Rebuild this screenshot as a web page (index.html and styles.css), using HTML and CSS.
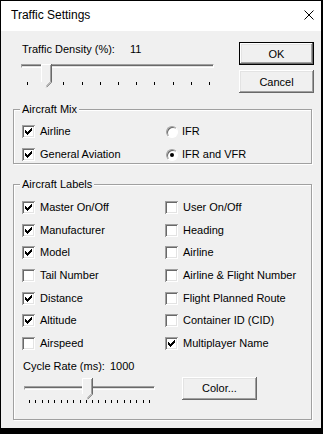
FILE: index.html
```html
<!DOCTYPE html>
<html lang="en">
<head>
    <meta charset="UTF-8">
    <title>Traffic Settings</title>
    <link rel="stylesheet" href="styles.css">
</head>
<body>
    <div class="window">
        <div class="titlebar">
            <span class="title">Traffic Settings</span>
            <svg class="close" width="10" height="10" viewBox="0 0 10 10"><path d="M0.5 0.5L9.5 9.5M9.5 0.5L0.5 9.5" stroke="#000" stroke-width="1" fill="none"/></svg>
        </div>
        <div class="content">
            <div class="top">
                <div class="density">
                    <div class="value-line"><span>Traffic Density (%):</span><span class="value">11</span></div>
                    <div class="slider slider-density">
                        <div class="track"></div>
                        <svg class="thumb" style="left: 20px" width="11" height="24" viewBox="0 0 11 24">
                            <path d="M0 0H11V18L5.5 23.5L0 18Z" fill="#f0f0f0"/>
                            <path d="M0.5 18V0.5H10" stroke="#fff" fill="none"/>
                            <path d="M10.5 0V18.2L5.5 23.2" stroke="#696969" fill="none"/>
                            <path d="M9.5 1V17.8L5.5 21.8" stroke="#a0a0a0" fill="none"/>
                        </svg>
                        <div class="ticks">
                            <span></span><span></span><span></span><span></span><span></span><span></span>
                            <span></span><span></span><span></span><span></span><span></span>
                        </div>
                    </div>
                </div>
                <div class="buttons">
                    <button class="btn btn-default">OK</button>
                    <button class="btn">Cancel</button>
                </div>
            </div>

            <div class="group group-mix">
                <span class="group-title">Aircraft Mix</span>
                <div class="options">
                    <div class="opt"><span class="check on"><svg width="13" height="13" viewBox="0 0 13 13"><path d="M9 3H10V6H9V7H8V8H7V9H6V10H5V9H4V8H3V5H4V6H5V7H6V6H7V5H8V4H9Z" fill="#000"/></svg></span>Airline</div>
                    <div class="opt"><span class="radio"></span>IFR</div>
                    <div class="opt"><span class="check on"><svg width="13" height="13" viewBox="0 0 13 13"><path d="M9 3H10V6H9V7H8V8H7V9H6V10H5V9H4V8H3V5H4V6H5V7H6V6H7V5H8V4H9Z" fill="#000"/></svg></span>General Aviation</div>
                    <div class="opt"><span class="radio on"></span>IFR and VFR</div>
                </div>
            </div>

            <div class="group group-labels">
                <span class="group-title">Aircraft Labels</span>
                <div class="options">
                    <div class="opt"><span class="check on"><svg width="13" height="13" viewBox="0 0 13 13"><path d="M9 3H10V6H9V7H8V8H7V9H6V10H5V9H4V8H3V5H4V6H5V7H6V6H7V5H8V4H9Z" fill="#000"/></svg></span>Master On/Off</div>
                    <div class="opt"><span class="check"></span>User On/Off</div>
                    <div class="opt"><span class="check on"><svg width="13" height="13" viewBox="0 0 13 13"><path d="M9 3H10V6H9V7H8V8H7V9H6V10H5V9H4V8H3V5H4V6H5V7H6V6H7V5H8V4H9Z" fill="#000"/></svg></span>Manufacturer</div>
                    <div class="opt"><span class="check"></span>Heading</div>
                    <div class="opt"><span class="check on"><svg width="13" height="13" viewBox="0 0 13 13"><path d="M9 3H10V6H9V7H8V8H7V9H6V10H5V9H4V8H3V5H4V6H5V7H6V6H7V5H8V4H9Z" fill="#000"/></svg></span>Model</div>
                    <div class="opt"><span class="check"></span>Airline</div>
                    <div class="opt"><span class="check"></span>Tail Number</div>
                    <div class="opt"><span class="check"></span>Airline &amp; Flight Number</div>
                    <div class="opt"><span class="check on"><svg width="13" height="13" viewBox="0 0 13 13"><path d="M9 3H10V6H9V7H8V8H7V9H6V10H5V9H4V8H3V5H4V6H5V7H6V6H7V5H8V4H9Z" fill="#000"/></svg></span>Distance</div>
                    <div class="opt"><span class="check"></span>Flight Planned Route</div>
                    <div class="opt"><span class="check on"><svg width="13" height="13" viewBox="0 0 13 13"><path d="M9 3H10V6H9V7H8V8H7V9H6V10H5V9H4V8H3V5H4V6H5V7H6V6H7V5H8V4H9Z" fill="#000"/></svg></span>Altitude</div>
                    <div class="opt"><span class="check"></span>Container ID (CID)</div>
                    <div class="opt"><span class="check"></span>Airspeed</div>
                    <div class="opt"><span class="check on"><svg width="13" height="13" viewBox="0 0 13 13"><path d="M9 3H10V6H9V7H8V8H7V9H6V10H5V9H4V8H3V5H4V6H5V7H6V6H7V5H8V4H9Z" fill="#000"/></svg></span>Multiplayer Name</div>
                </div>
                <div class="value-line cycle"><span>Cycle Rate (ms):</span><span class="value">1000</span></div>
                <div class="cycle-row">
                    <div class="slider slider-cycle">
                        <div class="track"></div>
                        <svg class="thumb" style="left: 58px" width="11" height="22" viewBox="0 0 11 22">
                            <path d="M0 0H11V16L5.5 21.5L0 16Z" fill="#f0f0f0"/>
                            <path d="M0.5 16V0.5H10" stroke="#fff" fill="none"/>
                            <path d="M10.5 0V16.2L5.5 21.2" stroke="#696969" fill="none"/>
                            <path d="M9.5 1V15.8L5.5 19.8" stroke="#a0a0a0" fill="none"/>
                        </svg>
                        <div class="ticks">
                            <span></span><span></span><span></span><span></span><span></span><span></span><span></span>
                            <span></span><span></span><span></span><span></span><span></span><span></span><span></span>
                            <span></span><span></span><span></span><span></span><span></span><span></span>
                        </div>
                    </div>
                    <button class="btn">Color...</button>
                </div>
            </div>
        </div>
    </div>
</body>
</html>
```

FILE: styles.css
```css
body {
    margin: 0;
    background: #000;
    font-family: "Liberation Sans", Arial, sans-serif;
    font-size: 11px;
    color: #000;
}
.window {
    margin: 1px 0 0 1px;
    width: 320px;
    height: 427px;
    background: #f0f0f0;
    display: flex;
    flex-direction: column;
}
.titlebar {
    height: 30px;
    background: #fff;
    display: flex;
    align-items: center;
    justify-content: space-between;
    padding: 0 7px 2px 10px;
    box-sizing: border-box;
    font-size: 12px;
    line-height: 14px;
}
.content {
    padding: 11px 7px 0 12px;
}
.top {
    display: flex;
    justify-content: space-between;
}
.density {
    padding: 1px 0 0 8px;
}
.value-line {
    line-height: 13px;
    padding-left: 1px;
    display: flex;
}
.value-line .value {
    margin-left: 15px;
}
.cycle .value {
    margin-left: 5px;
}
.slider {
    position: relative;
}
.slider-density {
    width: 193px;
    height: 30px;
    margin-top: 4px;
}
.track {
    height: 2px;
    border: 1px solid;
    border-color: #a0a0a0 #fff #fff #a0a0a0;
    background: linear-gradient(#696969 50%, #e3e3e3 50%);
    margin-top: 8px;
}
.thumb {
    position: absolute;
    top: 0;
    display: block;
}
.ticks {
    display: flex;
    justify-content: space-between;
}
.ticks span {
    width: 1px;
    height: 3px;
    background: #000;
}
.slider-density .ticks {
    margin-top: 14px;
    padding: 0 4px 0 6px;
}
.buttons {
    display: flex;
    flex-direction: column;
    gap: 5px;
}
.btn {
    width: 75px;
    height: 23px;
    padding: 0;
    font-family: inherit;
    font-size: 11px;
    color: #000;
    background: #f0f0f0;
    border: none;
    box-shadow: inset -1px -1px 0 #696969, inset 1px 1px 0 #fff, inset -2px -2px 0 #a0a0a0, inset 2px 2px 0 #e3e3e3;
}
.btn-default {
    box-shadow: inset 0 0 0 1px #000, inset -2px -2px 0 #696969, inset 2px 2px 0 #fff, inset -3px -3px 0 #a0a0a0, inset 3px 3px 0 #e3e3e3;
}
.group {
    position: relative;
    width: 299px;
    box-sizing: border-box;
    border: 1px solid #a0a0a0;
    box-shadow: inset 1px 1px 0 #fff, 1px 1px 0 #fff;
}
.group-title {
    position: absolute;
    top: -7px;
    left: 6px;
    padding: 0 2px;
    line-height: 13px;
    background: #f0f0f0;
}
.group-mix {
    margin-top: 15px;
    padding: 15px 0 2px 8px;
}
.group-labels {
    margin-top: 20px;
    padding: 16px 0 14px 8px;
}
.options {
    display: grid;
    grid-template-columns: 143px 1fr;
    grid-auto-rows: 13px;
}
.group-mix .options {
    row-gap: 10px;
}
.group-labels .options {
    row-gap: 9.67px;
}
.opt {
    display: flex;
    align-items: center;
    line-height: 13px;
    white-space: nowrap;
}
.check {
    width: 13px;
    height: 13px;
    box-sizing: border-box;
    margin-right: 5px;
    background: #fff;
    box-shadow: inset 1px 1px 0 #a0a0a0, inset -1px -1px 0 #fff, inset 2px 2px 0 #696969, inset -2px -2px 0 #e3e3e3;
    flex: none;
}
.check svg {
    display: block;
    shape-rendering: crispEdges;
}
.radio {
    position: relative;
    width: 12px;
    height: 12px;
    box-sizing: border-box;
    margin: 0 4px 0 1px;
    border-radius: 50%;
    border: 1px solid;
    border-color: #a0a0a0 #fff #fff #a0a0a0;
    background: #fff;
    box-shadow: inset 1px 1px 0 #696969;
    flex: none;
}
.radio.on::after {
    content: "";
    position: absolute;
    left: 3px;
    top: 3px;
    width: 4px;
    height: 4px;
    border-radius: 50%;
    background: #000;
}
.cycle {
    margin-top: 10px;
}
.cycle-row {
    display: flex;
    align-items: flex-start;
    margin-top: 4px;
}
.slider-cycle {
    width: 131px;
    height: 27px;
    margin: 1px 27px 0 2px;
}
.slider-cycle .ticks {
    margin-top: 10px;
    padding: 0 5px;
}
```
